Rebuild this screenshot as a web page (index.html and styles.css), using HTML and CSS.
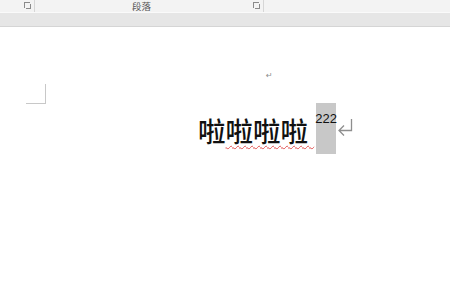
FILE: index.html
```html
<!DOCTYPE html>
<html lang="zh">
	<head>
		<meta charset="UTF-8">
		<title>段落</title>
		<link rel="stylesheet" href="styles.css">
	</head>
	<body>
		<div class="ribbon">
			<div class="group group-left">
				<span class="launcher"></span>
			</div>
			<div class="group group-para">
				<span class="group-name">段落</span>
				<span class="launcher"></span>
			</div>
			<div class="group group-rest"></div>
		</div>
		<div class="ruler"></div>

		<div class="page">
			<span class="para-mark small">↵</span>
			<div class="corner"></div>
			<div class="line">
				<span class="big">啦<span class="squiggle">啦啦啦&nbsp;</span></span><span class="sel"><sup>222</sup></span>
				<svg class="return" width="18" height="18" viewBox="0 0 18 18">
					<path d="M14.5 1 V12.5 H2 M7 7.5 L2 12.5 L7 17.5" fill="none" stroke="#8e8e8e" stroke-width="1.3"/>
				</svg>
			</div>
		</div>
	</body>
</html>
```
FILE: styles.css
```css
body {
	margin: 0;
	width: 450px;
	height: 300px;
	overflow: hidden;
	background: #fff;
	font-family: "Noto Sans CJK SC", "Liberation Sans", sans-serif;
	position: relative;
}

.ribbon {
	display: flex;
	height: 12px;
	background: #f3f3f3;
	border-bottom: 1px solid #fafafa;
}
.group {
	position: relative;
	border-right: 1px solid #d6d6d6;
	height: 12px;
}
.group-left {
	width: 34px;
}
.group-para {
	width: 228px;
}
.group-rest {
	border: 0;
	flex: 1;
}
.group-name {
	position: absolute;
	left: 97px;
	top: 0;
	font-size: 9.5px;
	color: #555;
	line-height: normal;
	margin-top: -1px;
}
.launcher {
	position: absolute;
	right: 4px;
	top: 2px;
	width: 5px;
	height: 5px;
	border: 1px solid #8a8a8a;
	border-width: 1px 0 0 1px;
}
.launcher::after {
	content: "";
	position: absolute;
	left: 1px;
	top: 1px;
	width: 4px;
	height: 4px;
	border: 1px solid #8a8a8a;
	border-width: 0 1px 1px 0;
}

.ruler {
	height: 13px;
	background: #e6e6e6;
	border-bottom: 1px solid #d5d5d5;
}

.page {
	position: relative;
	height: 273px;
}
.para-mark {
	color: #8c8c8c;
	font-family: "DejaVu Sans", sans-serif;
}
.para-mark.small {
	position: absolute;
	left: 266px;
	top: 44px;
	font-size: 8px;
}
.corner {
	position: absolute;
	left: 26px;
	top: 57px;
	width: 19px;
	height: 19px;
	border-right: 1px solid #c8c8c8;
	border-bottom: 1px solid #c8c8c8;
}

.line {
	position: absolute;
	left: 198px;
	top: 76px;
	display: flex;
	align-items: center;
	height: 51px;
}
.big {
	font-size: 27.5px;
	font-weight: 500;
	color: #111;
	line-height: 30px;
	margin-top: 2px;
	white-space: pre;
}
.squiggle {
	text-decoration: underline wavy #e05050;
	text-decoration-thickness: 1px;
	text-underline-offset: 3px;
}
.sel {
	background: #c8c8c8;
	width: 20px;
	height: 51px;
	margin-left: 2px;
	display: flex;
	justify-content: center;
}
.sel sup {
	font-size: 13px;
	font-family: "Liberation Sans", sans-serif;
	color: #111;
	line-height: 13px;
	margin-top: 9px;
}
.return {
	margin-left: 1px;
	margin-top: -4px;
}
```
